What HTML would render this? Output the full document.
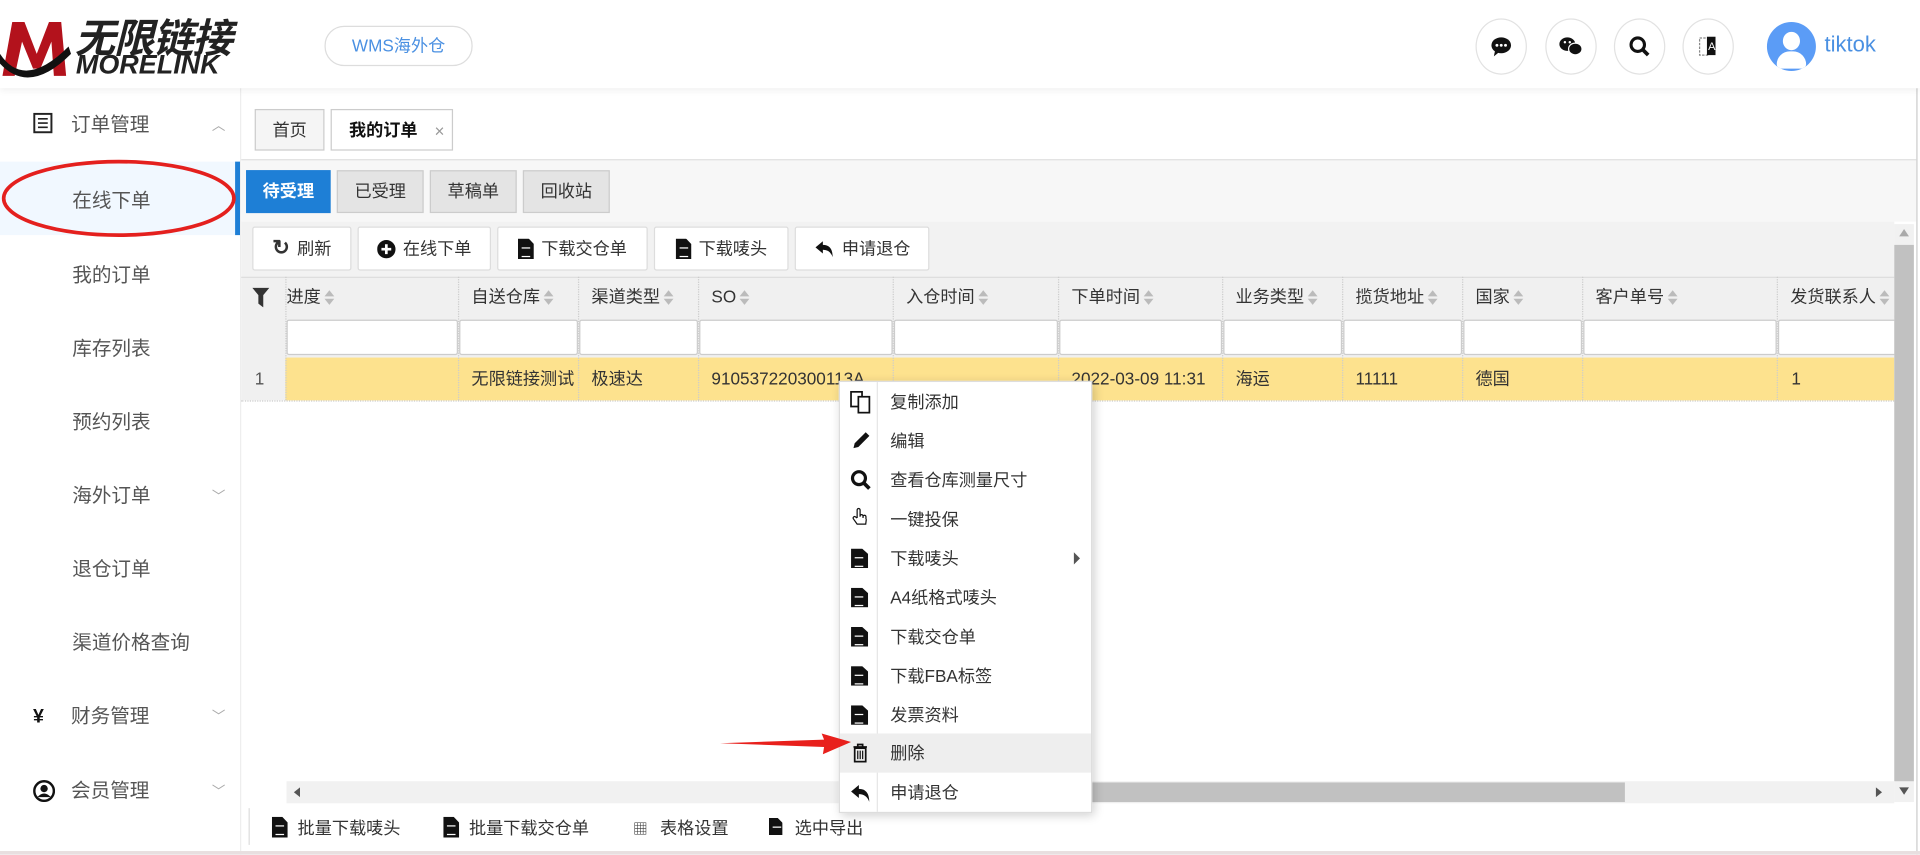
<!DOCTYPE html>
<html><head><meta charset="utf-8"><style>
html,body{margin:0;padding:0;width:1920px;height:855px;overflow:hidden;background:#fff}
#w{position:absolute;left:0;top:0;width:1568px;height:698px;transform:scale(1.22449);transform-origin:0 0;font-family:"Liberation Sans","Noto Sans CJK SC",sans-serif;color:#333;font-size:14px}
.a{position:absolute}
.hdr{left:0;top:0;width:1568px;height:72px;background:#fff;box-shadow:0 2px 6px rgba(0,0,0,.07);z-index:2}
.ic{width:40px;height:44px;border:1px solid #e2e2e2;border-radius:50%;top:15px;display:flex;align-items:center;justify-content:center}
.side{left:0;top:72px;width:196px;height:626px;background:#fff;border-right:1px solid #eee}
.si{position:absolute;left:0;width:196px;height:60px;line-height:66px;font-size:16px;color:#555}
.chev{position:absolute;right:12px;top:0;color:#aaa;font-size:11px}
.tab{border:1px solid #ccc;background:#f5f5f5;height:32px;line-height:32px;top:89px;font-size:14px;text-align:center}
.sb{top:139px;height:33px;line-height:33px;border:1px solid #ccc;background:#e4e4e4;text-align:center;font-size:14px;color:#333}
.tb{top:185px;height:34px;line-height:34px;border:1px solid #ddd;background:#fff;font-size:14px;border-radius:2px;display:flex;align-items:center;justify-content:center;gap:6px}
.col{position:absolute;top:226px;height:101px;border-left:1px dotted #ccc}
.hd{top:226px;height:32px;line-height:32px;font-size:14px;color:#333}
.srt{display:inline-block;width:8px;height:12px;vertical-align:middle;margin-left:3px;position:relative}
.srt:before{content:"";position:absolute;left:0;top:0;border:4px solid transparent;border-bottom:5px solid #bbb;border-top:0}
.srt:after{content:"";position:absolute;left:0;top:7px;border:4px solid transparent;border-top:5px solid #bbb;border-bottom:0}
.fi{top:261px;height:27px;background:#fff;border:1px solid #ccc;border-radius:2px}
.dc{top:292px;height:35px;line-height:35px;font-size:14px;color:#333}
.menu{left:685px;top:311px;width:205px;height:351px;background:#fff;border:1px solid #ddd;box-shadow:2px 2px 8px rgba(0,0,0,.2);z-index:5}
.mi{position:absolute;left:0;width:205px;height:32px;line-height:32px;font-size:14px}
.mi span{position:absolute;left:41px}
.mi i{position:absolute;left:9px;top:8px;width:14px;height:16px}
.doc{background:#111;clip-path:polygon(0 0,65% 0,100% 28%,100% 100%,0 100%)}
.doc:after{content:"";position:absolute;left:3px;top:7px;width:7px;height:6px;border-top:1.5px solid #fff;border-bottom:1.5px solid #fff}
</style></head><body><div id="w">
<div class="a hdr">
 <svg class="a" style="left:0;top:4px" width="60" height="62" viewBox="0 0 60 62"><path d="M2 58 L10 14 L20 14 L30 40 L40 14 L50 14 L54 58 L44 58 L42 30 L33 52 L27 52 L18 30 L12 58Z" fill="#b3121c"/><path d="M0 40 Q20 70 56 34 L58 40 Q24 74 0 48Z" fill="#111"/></svg>
 <div class="a" style="left:61px;top:5px;font-size:33px;font-weight:bold;font-style:italic;color:#222;letter-spacing:-1px">无限链接</div>
 <div class="a" style="left:62px;top:40px;font-size:22px;font-weight:bold;font-style:italic;color:#222">MORELINK</div>
 <div class="a" style="left:265px;top:21px;width:119px;height:31px;border:1px solid #ddd;border-radius:16px;text-align:center;line-height:31px;color:#4a90e2;font-size:14px">WMS海外仓</div>
 <div class="a ic" style="left:1205px"><svg width="18" height="18" viewBox="0 0 18 18"><ellipse cx="9" cy="8" rx="8" ry="6.5" fill="#111"/><path d="M4 12 L3 17 L8 13Z" fill="#111"/><circle cx="5.5" cy="8" r="1.2" fill="#fff"/><circle cx="9" cy="8" r="1.2" fill="#fff"/><circle cx="12.5" cy="8" r="1.2" fill="#fff"/></svg></div>
 <div class="a ic" style="left:1262px"><svg width="20" height="18" viewBox="0 0 20 18"><ellipse cx="7" cy="7" rx="6.5" ry="5.5" fill="#111"/><ellipse cx="13.5" cy="11" rx="5.5" ry="4.8" fill="#111" stroke="#fff" stroke-width="1"/><circle cx="5" cy="5.5" r="1" fill="#fff"/><circle cx="9" cy="5.5" r="1" fill="#fff"/></svg></div>
 <div class="a ic" style="left:1318px"><svg width="18" height="18" viewBox="0 0 18 18"><circle cx="7.5" cy="7.5" r="5.5" fill="none" stroke="#111" stroke-width="2.5"/><path d="M11.5 11.5 L16 16" stroke="#111" stroke-width="3"/></svg></div>
 <div class="a ic" style="left:1374px"><svg width="16" height="18" viewBox="0 0 16 18"><rect x="1" y="2" width="7" height="14" fill="none" stroke="#888" stroke-dasharray="2 1"/><rect x="7" y="1" width="7" height="15" fill="#111"/><text x="8" y="12" font-size="9" fill="#fff" font-family="Liberation Sans">A</text></svg></div>
 <div class="a" style="left:1443px;top:18px;width:40px;height:40px;border-radius:50%;background:#5b9cf6;overflow:hidden"><div class="a" style="left:13px;top:8px;width:14px;height:15px;border-radius:50%;background:#fff"></div><div class="a" style="left:8px;top:24px;width:24px;height:14px;border-radius:12px 12px 4px 4px;background:#fff"></div></div>
 <div class="a" style="left:1490px;top:26px;font-size:18px;color:#4a90e2">tiktok</div>
</div>
<div class="a side">
 <div class="si" style="top:-2px"><svg class="a" style="left:27px;top:22px" width="16" height="17" viewBox="0 0 16 17"><rect x="1" y="1" width="14" height="15" fill="none" stroke="#222" stroke-width="1.6"/><path d="M4 5h8M4 8.5h8M4 12h8" stroke="#222" stroke-width="1.3"/></svg><span class="a" style="left:58px">订单管理</span><span class="chev">︿</span></div>
 <div class="si" style="top:60px;background:#f1f8ff"><span class="a" style="left:59px">在线下单</span><div class="a" style="right:0;top:0;width:4px;height:60px;background:#1e7fd6"></div></div>
 <div class="si" style="top:121px"><span class="a" style="left:59px">我的订单</span></div>
 <div class="si" style="top:181px"><span class="a" style="left:59px">库存列表</span></div>
 <div class="si" style="top:241px"><span class="a" style="left:59px">预约列表</span></div>
 <div class="si" style="top:301px"><span class="a" style="left:59px">海外订单</span><span class="chev">﹀</span></div>
 <div class="si" style="top:361px"><span class="a" style="left:59px">退仓订单</span></div>
 <div class="si" style="top:421px"><span class="a" style="left:59px">渠道价格查询</span></div>
 <div class="si" style="top:481px"><span class="a" style="left:27px;font-weight:bold;color:#111">¥</span><span class="a" style="left:58px">财务管理</span><span class="chev">﹀</span></div>
 <div class="si" style="top:542px"><svg class="a" style="left:27px;top:23px" width="18" height="18" viewBox="0 0 18 18"><circle cx="9" cy="9" r="8" fill="none" stroke="#111" stroke-width="2"/><circle cx="9" cy="7" r="3" fill="#111"/><path d="M3.5 14 Q9 8 14.5 14" fill="#111"/></svg><span class="a" style="left:58px">会员管理</span><span class="chev">﹀</span></div>
</div>
<svg class="a" style="left:0;top:128px;z-index:3" width="200" height="70"><ellipse cx="97" cy="34" rx="94" ry="30" fill="none" stroke="#e4201e" stroke-width="3"/></svg>
<div class="a tab" style="left:208px;width:55px">首页</div>
<div class="a tab" style="left:270px;width:98px;background:#fff;font-weight:bold;color:#111"><span style="margin-right:14px">我的订单</span><span class="a" style="right:6px;top:1px;color:#999;font-weight:normal">×</span></div>
<div class="a" style="left:197px;top:130px;width:1368px;height:1px;background:#ddd"></div>
<div class="a" style="left:197px;top:131px;width:1368px;height:50px;background:#f7f7f7"></div>
<div class="a sb" style="left:201px;width:67px;background:#1e7fd6;border-color:#1e7fd6;color:#fff;font-weight:bold">待受理</div>
<div class="a sb" style="left:275px;width:69px">已受理</div>
<div class="a sb" style="left:351px;width:69px">草稿单</div>
<div class="a sb" style="left:427px;width:69px">回收站</div>
<div class="a" style="left:197px;top:181px;width:1350px;height:45px;background:#f2f2f2"></div>
<div class="a tb" style="left:206px;width:79px"><b style="font-size:17px">↻</b>刷新</div>
<div class="a tb" style="left:292px;width:107px"><svg width="15" height="15"><circle cx="7.5" cy="7.5" r="7.5" fill="#111"/><path d="M7.5 3.5v8M3.5 7.5h8" stroke="#fff" stroke-width="2.2"/></svg>在线下单</div>
<div class="a tb" style="left:406px;width:121px"><i class="doc" style="position:relative;width:13px;height:17px;display:inline-block"></i>下载交仓单</div>
<div class="a tb" style="left:534px;width:108px"><i class="doc" style="position:relative;width:13px;height:17px;display:inline-block"></i>下载唛头</div>
<div class="a tb" style="left:649px;width:108px"><svg width="17" height="15" viewBox="0 0 17 15"><path d="M7 1 L1 6 L7 11 V8 Q13 8 15 14 Q15 4 7 4Z" fill="#111"/></svg>申请退仓</div>
<div class="a" style="left:197px;top:226px;width:1350px;height:32px;background:#f0f0f0;border-top:1px solid #ddd"></div>
<div class="a" style="left:197px;top:258px;width:1350px;height:34px;background:#f0f0f0"></div>
<div class="a" style="left:197px;top:292px;width:36px;height:35px;background:#f0f0f0"></div>
<div class="a" style="left:233px;top:292px;width:1314px;height:35px;background:#fde28e"></div>
<div class="a" style="left:197px;top:327px;width:1350px;height:1px;border-top:1px dotted #ccc"></div>
<svg class="a" style="left:206px;top:235px" width="14" height="16"><path d="M0 0h14L9 6v10L5 13V6Z" fill="#333"/></svg>
<div class="a dc" style="left:208px;color:#555">1</div>
<div class="col" style="left:233px"></div><div class="col" style="left:374px"></div><div class="col" style="left:472px"></div><div class="col" style="left:570px"></div><div class="col" style="left:729px"></div><div class="col" style="left:864px"></div><div class="col" style="left:998px"></div><div class="col" style="left:1096px"></div><div class="col" style="left:1194px"></div><div class="col" style="left:1292px"></div><div class="col" style="left:1451px"></div>
<div class="a hd" style="left:234px">进度<i class="srt"></i></div>
<div class="a hd" style="left:385px">自送仓库<i class="srt"></i></div>
<div class="a hd" style="left:483px">渠道类型<i class="srt"></i></div>
<div class="a hd" style="left:581px">SO<i class="srt"></i></div>
<div class="a hd" style="left:740px">入仓时间<i class="srt"></i></div>
<div class="a hd" style="left:875px">下单时间<i class="srt"></i></div>
<div class="a hd" style="left:1009px">业务类型<i class="srt"></i></div>
<div class="a hd" style="left:1107px">揽货地址<i class="srt"></i></div>
<div class="a hd" style="left:1205px">国家<i class="srt"></i></div>
<div class="a hd" style="left:1303px">客户单号<i class="srt"></i></div>
<div class="a hd" style="left:1462px">发货联系人<i class="srt"></i></div>
<div class="a fi" style="left:234px;width:138px"></div><div class="a fi" style="left:375px;width:95px"></div><div class="a fi" style="left:473px;width:95px"></div><div class="a fi" style="left:571px;width:156px"></div><div class="a fi" style="left:730px;width:132px"></div><div class="a fi" style="left:865px;width:131px"></div><div class="a fi" style="left:999px;width:95px"></div><div class="a fi" style="left:1097px;width:95px"></div><div class="a fi" style="left:1195px;width:95px"></div><div class="a fi" style="left:1293px;width:156px"></div><div class="a fi" style="left:1452px;width:95px"></div>
<div class="a dc" style="left:385px">无限链接测试</div>
<div class="a dc" style="left:483px">极速达</div>
<div class="a dc" style="left:581px">910537220300113A</div>
<div class="a dc" style="left:875px">2022-03-09 11:31</div>
<div class="a dc" style="left:1009px">海运</div>
<div class="a dc" style="left:1107px">11111</div>
<div class="a dc" style="left:1205px">德国</div>
<div class="a dc" style="left:1463px">1</div>
<div class="a" style="left:1547px;top:183px;width:16px;height:472px;background:#f1f1f1"></div>
<div class="a" style="left:1547px;top:200px;width:16px;height:438px;background:#c1c1c1"></div>
<div class="a" style="left:1551px;top:187px;border:4px solid transparent;border-bottom:6px solid #aaa;border-top:0"></div>
<div class="a" style="left:1551px;top:643px;border:4px solid transparent;border-top:6px solid #555;border-bottom:0"></div>
<div class="a" style="left:234px;top:638px;width:1313px;height:18px;background:#f1f1f1"></div>
<div class="a" style="left:890px;top:639px;width:437px;height:16px;background:#c1c1c1"></div>
<div class="a" style="left:240px;top:643px;border:4px solid transparent;border-right:5px solid #555;border-left:0"></div>
<div class="a" style="left:1532px;top:643px;border:4px solid transparent;border-left:5px solid #555;border-right:0"></div>
<div class="a" style="left:1565px;top:72px;width:1px;height:626px;background:#ccc"></div>
<div class="a" style="left:203px;top:660px;width:1px;height:30px;background:#ddd"></div>
<div class="a" style="left:222px;top:666px;font-size:14px"><i class="doc" style="position:relative;width:13px;height:17px;display:inline-block;vertical-align:-3px;margin-right:8px"></i>批量下载唛头</div>
<div class="a" style="left:362px;top:666px;font-size:14px"><i class="doc" style="position:relative;width:13px;height:17px;display:inline-block;vertical-align:-3px;margin-right:8px"></i>批量下载交仓单</div>
<div class="a" style="left:517px;top:666px;font-size:14px"><span style="font-size:12px;margin-right:10px">▦</span>表格设置</div>
<div class="a" style="left:628px;top:666px;font-size:14px"><i class="doc" style="position:relative;width:11px;height:14px;display:inline-block;vertical-align:-1px;margin-right:10px"></i>选中导出</div>
<div class="a" style="left:0;top:695px;width:1568px;height:3px;background:#e8dfe0"></div>
<div class="a menu">
 <div class="a" style="left:30px;top:0;width:1px;height:351px;background:#e6e6e6"></div>
 <div class="mi" style="top:0"><svg class="a" style="left:8px;top:7px" width="18" height="19" viewBox="0 0 18 19"><rect x="1" y="1" width="9" height="12" fill="#fff" stroke="#111" stroke-width="1.4"/><rect x="7" y="5" width="9" height="13" fill="#fff" stroke="#111" stroke-width="1.4"/></svg><span>复制添加</span></div>
 <div class="mi" style="top:32px"><svg class="a" style="left:9px;top:8px" width="16" height="16"><path d="M2 14 L3 10 L12 1 L15 4 L6 13Z" fill="#111"/></svg><span>编辑</span></div>
 <div class="mi" style="top:64px"><svg class="a" style="left:8px;top:7px" width="18" height="18"><circle cx="7.5" cy="7.5" r="5.3" fill="none" stroke="#111" stroke-width="2.6"/><path d="M11 11 L16 16" stroke="#111" stroke-width="3"/></svg><span>查看仓库测量尺寸</span></div>
 <div class="mi" style="top:96px"><svg class="a" style="left:9px;top:6px" width="16" height="18" viewBox="0 0 16 18"><path d="M5 9V2.5a1.2 1.2 0 0 1 2.4 0V8 M7.4 7.5a1.2 1.2 0 0 1 2.4 0V9 M9.8 8a1.2 1.2 0 0 1 2.4 0V10 M5 9L3.5 8a1.2 1.2 0 0 0-1.5 1.8L5 14h7l.5-4" fill="#fff" stroke="#111" stroke-width="1"/></svg><span>一键投保</span></div>
 <div class="mi" style="top:128px"><i class="doc"></i><span>下载唛头</span><div class="a" style="left:191px;top:11px;border:5px solid transparent;border-left:5px solid #555;border-right:0"></div></div>
 <div class="mi" style="top:160px"><i class="doc"></i><span>A4纸格式唛头</span></div>
 <div class="mi" style="top:192px"><i class="doc"></i><span>下载交仓单</span></div>
 <div class="mi" style="top:224px"><i class="doc"></i><span>下载FBA标签</span></div>
 <div class="mi" style="top:256px"><i class="doc"></i><span>发票资料</span></div>
 <div class="mi" style="top:287px;background:#eee"><svg class="a" style="left:10px;top:8px" width="13" height="16" viewBox="0 0 13 16"><path d="M1 3h11M4.5 3V1h4v2" fill="none" stroke="#111" stroke-width="1.4"/><rect x="2" y="4" width="9" height="11" fill="none" stroke="#111" stroke-width="1.4"/><path d="M4.5 6v7M6.5 6v7M8.5 6v7" stroke="#111"/></svg><span>删除</span></div>
 <div class="mi" style="top:319px"><svg class="a" style="left:8px;top:8px" width="18" height="18" viewBox="0 0 17 15"><path d="M7 1 L1 6 L7 11 V8 Q13 8 15 14 Q15 4 7 4Z" fill="#111"/></svg><span>申请退仓</span></div>
</div>
<svg class="a" style="left:585px;top:598px;z-index:6" width="115" height="20"><path d="M3 9 L88 6 L86 1 L110 8 L87 18 L88 12 Z" fill="#e8201c"/></svg>
</div></body></html>
